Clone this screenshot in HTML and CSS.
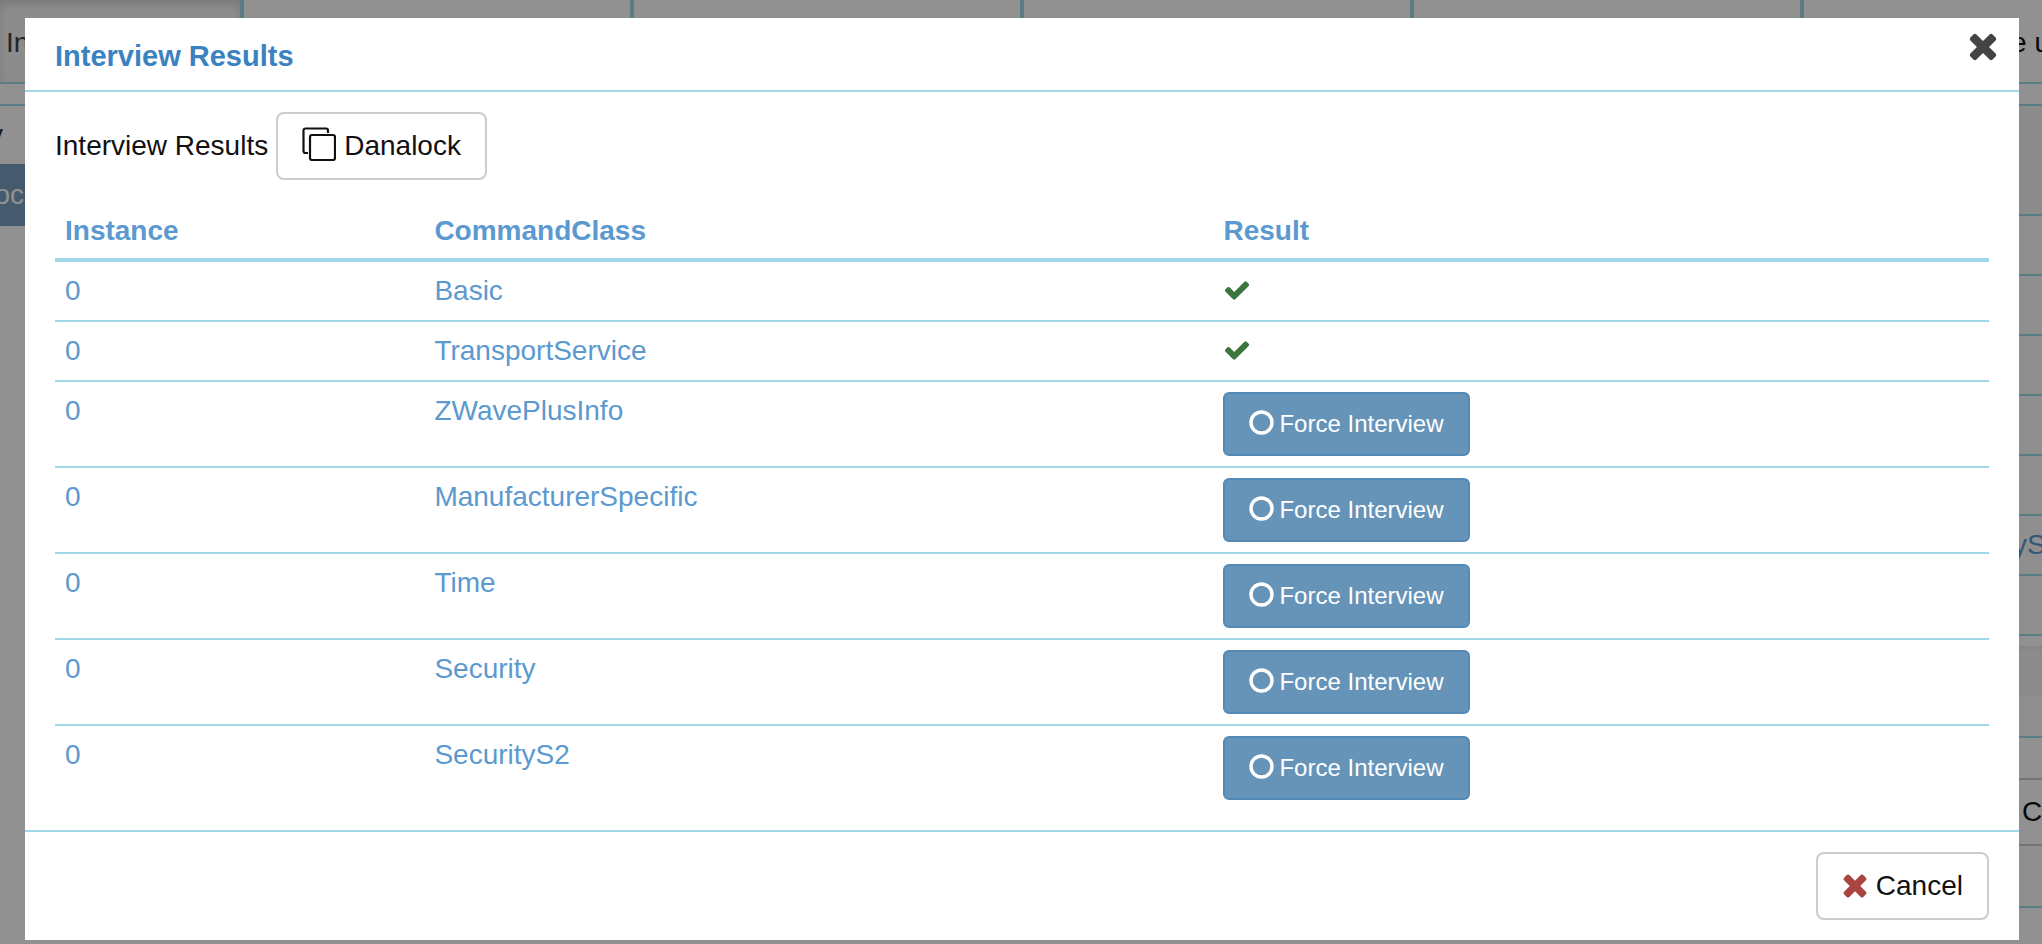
FILE: index.html
```html
<!DOCTYPE html>
<html lang="en">
<head>
    <meta charset="utf-8">
    <title>Interview Results</title>
    <link rel="stylesheet" href="styles.css">
</head>
<body>
    <svg class="sprite" aria-hidden="true">
        <symbol id="icon-times" viewBox="222 286 1348 1348">
            <path d="M1490 1322q0 40-28 68l-136 136q-28 28-68 28t-68-28l-294-294-294 294q-28 28-68 28t-68-28l-136-136q-28-28-28-68t28-68l294-294-294-294q-28-28-28-68t28-68l136-136q28-28 68-28t68 28l294 294 294-294q28-28 68-28t68 28l136 136q28 28 28 68t-28 68l-294 294 294 294q28 28 28 68z"/>
        </symbol>
        <symbol id="icon-check" viewBox="0 0 1792 1792">
            <path d="M1671 566q0 40-28 68l-724 724-136 136q-28 28-68 28t-68-28l-136-136-362-362q-28-28-28-68t28-68l136-136q28-28 68-28t68 28l294 295 656-657q28-28 68-28t68 28l136 136q28 28 28 68z"/>
        </symbol>
        <symbol id="icon-circle" viewBox="0 0 26 26">
            <circle cx="12.5" cy="12.5" r="10.5" fill="none" stroke="currentColor" stroke-width="3.4"/>
        </symbol>
        <symbol id="icon-clone" viewBox="0 0 34 34">
            <g fill="none" stroke="currentColor" stroke-width="2.2">
                <path d="M6 26H3.500a2 2 0 0 1-2-2V3.500a2 2 0 0 1 2-2H24a2 2 0 0 1 2 2V6"/>
                <rect x="8" y="8" width="25" height="25" rx="2"/>
            </g>
        </symbol>
    </svg>

    <div class="page">
        <nav class="tabs">
            <div class="tab active">In</div>
            <div class="tab"></div>
            <div class="tab"></div>
            <div class="tab"></div>
            <div class="tab"></div>
            <div class="tab last">e u</div>
        </nav>
        <main class="panels">
            <div class="devices">
                <div class="device-head">y</div>
                <div class="device selected">oc</div>
            </div>
            <div class="details">
                <div class="line tall"></div>
                <div class="line"></div>
                <div class="line"></div>
                <div class="line"></div>
                <div class="line"></div>
                <div class="line"></div>
                <div class="line link">yS</div>
                <div class="line"></div>
                <div class="panel-foot"></div>
                <div class="line panel-head"></div>
                <div class="gap"></div>
                <div class="field">C</div>
                <div class="line end"></div>
            </div>
        </main>
    </div>

    <div class="backdrop">
        <div class="modal" role="dialog" aria-labelledby="modal-title">
            <div class="modal-header">
                <h4 class="modal-title" id="modal-title">Interview Results</h4>
                <button type="button" class="close" aria-label="Close">
                    <svg><use href="#icon-times"/></svg>
                </button>
            </div>
            <div class="modal-body">
                <div class="device-line">
                    <span>Interview Results</span>
                    <button type="button" class="btn">
                        <svg class="icon-clone"><use href="#icon-clone"/></svg>
                        Danalock
                    </button>
                </div>
                <table class="results">
                    <thead>
                        <tr>
                            <th class="col-instance">Instance</th>
                            <th class="col-class">CommandClass</th>
                            <th>Result</th>
                        </tr>
                    </thead>
                    <tbody>
                        <tr>
                            <td>0</td>
                            <td>Basic</td>
                            <td><svg class="icon-check"><use href="#icon-check"/></svg></td>
                        </tr>
                        <tr>
                            <td>0</td>
                            <td>TransportService</td>
                            <td><svg class="icon-check"><use href="#icon-check"/></svg></td>
                        </tr>
                        <tr>
                            <td>0</td>
                            <td>ZWavePlusInfo</td>
                            <td><button type="button" class="btn btn-primary"><svg class="icon-circle"><use href="#icon-circle"/></svg>Force Interview</button></td>
                        </tr>
                        <tr>
                            <td>0</td>
                            <td>ManufacturerSpecific</td>
                            <td><button type="button" class="btn btn-primary"><svg class="icon-circle"><use href="#icon-circle"/></svg>Force Interview</button></td>
                        </tr>
                        <tr>
                            <td>0</td>
                            <td>Time</td>
                            <td><button type="button" class="btn btn-primary"><svg class="icon-circle"><use href="#icon-circle"/></svg>Force Interview</button></td>
                        </tr>
                        <tr>
                            <td>0</td>
                            <td>Security</td>
                            <td><button type="button" class="btn btn-primary"><svg class="icon-circle"><use href="#icon-circle"/></svg>Force Interview</button></td>
                        </tr>
                        <tr>
                            <td>0</td>
                            <td>SecurityS2</td>
                            <td><button type="button" class="btn btn-primary"><svg class="icon-circle"><use href="#icon-circle"/></svg>Force Interview</button></td>
                        </tr>
                    </tbody>
                </table>
            </div>
            <div class="modal-footer">
                <button type="button" class="btn">
                    <svg class="icon-cancel"><use href="#icon-times"/></svg>
                    Cancel
                </button>
            </div>
        </div>
    </div>
</body>
</html>
```
FILE: styles.css
```css
* {
    box-sizing: border-box;
}

body {
    margin: 0;
    font-family: "Liberation Sans", Arial, sans-serif;
    font-size: 28px;
    line-height: 38px;
    color: #111;
    background: #fff;
}

button {
    font-family: inherit;
    cursor: pointer;
}

svg {
    display: block;
    fill: currentColor;
}

.sprite {
    display: none;
}

/* page behind the dialog */
.page {
    height: 100vh;
    overflow: hidden;
}

.tabs {
    display: grid;
    grid-template-columns: 244px repeat(4, 390px) 1fr;
    border-bottom: 2px solid #a0d8ea;
}

.tab {
    padding: 24px 6px 20px;
    border-right: 4px solid #a0d8ea;
}

.tab.active {
    color: #444;
    background: #f7f7f7;
    box-shadow: inset 0 4px 8px rgba(0, 0, 0, 0.14);
}

.tab.last {
    display: flex;
    justify-content: flex-end;
    padding-right: 0;
    margin-right: -8px;
    border-right: 0;
}

.panels {
    display: flex;
    justify-content: space-between;
    margin-top: 20px;
    border-top: 2px solid #a0d8ea;
}

.devices {
    width: 25px;
}

.device-head,
.device {
    display: flex;
    justify-content: flex-end;
    white-space: nowrap;
}

.device-head {
    height: 58px;
    padding: 10px 22px 0 0;
    color: #333;
}

.device {
    padding: 12px 1px;
}

.device.selected {
    color: #fff;
    background: #7aa0c0;
}

.details {
    width: 29px;
    overflow: hidden;
}

.line {
    height: 60px;
    padding: 10px 0;
    border-bottom: 2px solid #a0d8ea;
    background: #fbfbfb;
}

.line.tall {
    height: 110px;
    background: #f6f6f6;
}

.line.link {
    color: #5b99cf;
}

.line.end {
    height: 62px;
}

.panel-foot {
    height: 50px;
    margin-top: 10px;
    background: #f7f7f7;
    box-shadow: inset 0 3px 6px rgba(0, 0, 0, 0.06);
}

.line.panel-head {
    height: 42px;
}

.gap {
    height: 40px;
}

.field {
    height: 68px;
    padding: 13px 9px;
    border-top: 2px solid #ccc;
    border-bottom: 2px solid #ccc;
}

/* dialog */
.backdrop {
    position: fixed;
    inset: 0;
    padding: 18px 23px 4px 25px;
    background: rgba(0, 0, 0, 0.43);
    overflow: auto;
}

.modal {
    background: #fff;
}

.modal-header {
    display: flex;
    justify-content: space-between;
    align-items: flex-start;
    padding: 14px 21px 10px 30px;
    border-bottom: 2px solid #a0d8ea;
}

.modal-title {
    margin: 0;
    font-size: 29px;
    line-height: 48px;
    color: #3a82c0;
}

.close {
    padding: 0;
    border: 0;
    background: none;
    color: #444;
}

.close svg {
    width: 30px;
    height: 30px;
}

.modal-body {
    padding: 20px 30px;
}

.device-line {
    display: flex;
    align-items: center;
    gap: 8px;
    margin-bottom: 20px;
}

.modal-footer {
    display: flex;
    justify-content: flex-end;
    padding: 20px 30px;
    border-top: 2px solid #a0d8ea;
}

.btn {
    display: flex;
    align-items: center;
    gap: 8px;
    height: 68px;
    padding: 0 24px;
    border: 2px solid #ccc;
    border-radius: 8px;
    background: #fff;
    color: #111;
    font-size: 28px;
}

.btn-primary {
    gap: 4px;
    height: 64px;
    border-color: #5489b5;
    border-radius: 6px;
    background: #6694b9;
    color: #fff;
    font-size: 24px;
}

.icon-clone {
    width: 34px;
    height: 34px;
    margin-bottom: 4px;
}

.icon-cancel {
    width: 26px;
    height: 26px;
    color: #a94442;
}

.icon-circle {
    width: 26px;
    height: 26px;
    margin-bottom: 2px;
}

.icon-check {
    width: 28px;
    height: 36px;
    color: #3c763d;
}

.results {
    width: 100%;
    table-layout: fixed;
    border-spacing: 0;
    color: #5b99cf;
}

.results th,
.results td {
    padding: 10px;
    text-align: left;
    vertical-align: top;
}

.results th {
    padding: 12px 10px 8px;
    border-bottom: 4px solid #a0d8ea;
}

.results td {
    border-bottom: 2px solid #a0d8ea;
}

.results tr:last-child td {
    border-bottom: 0;
}

.col-instance {
    width: 19.1%;
}

.col-class {
    width: 40.8%;
}
```
